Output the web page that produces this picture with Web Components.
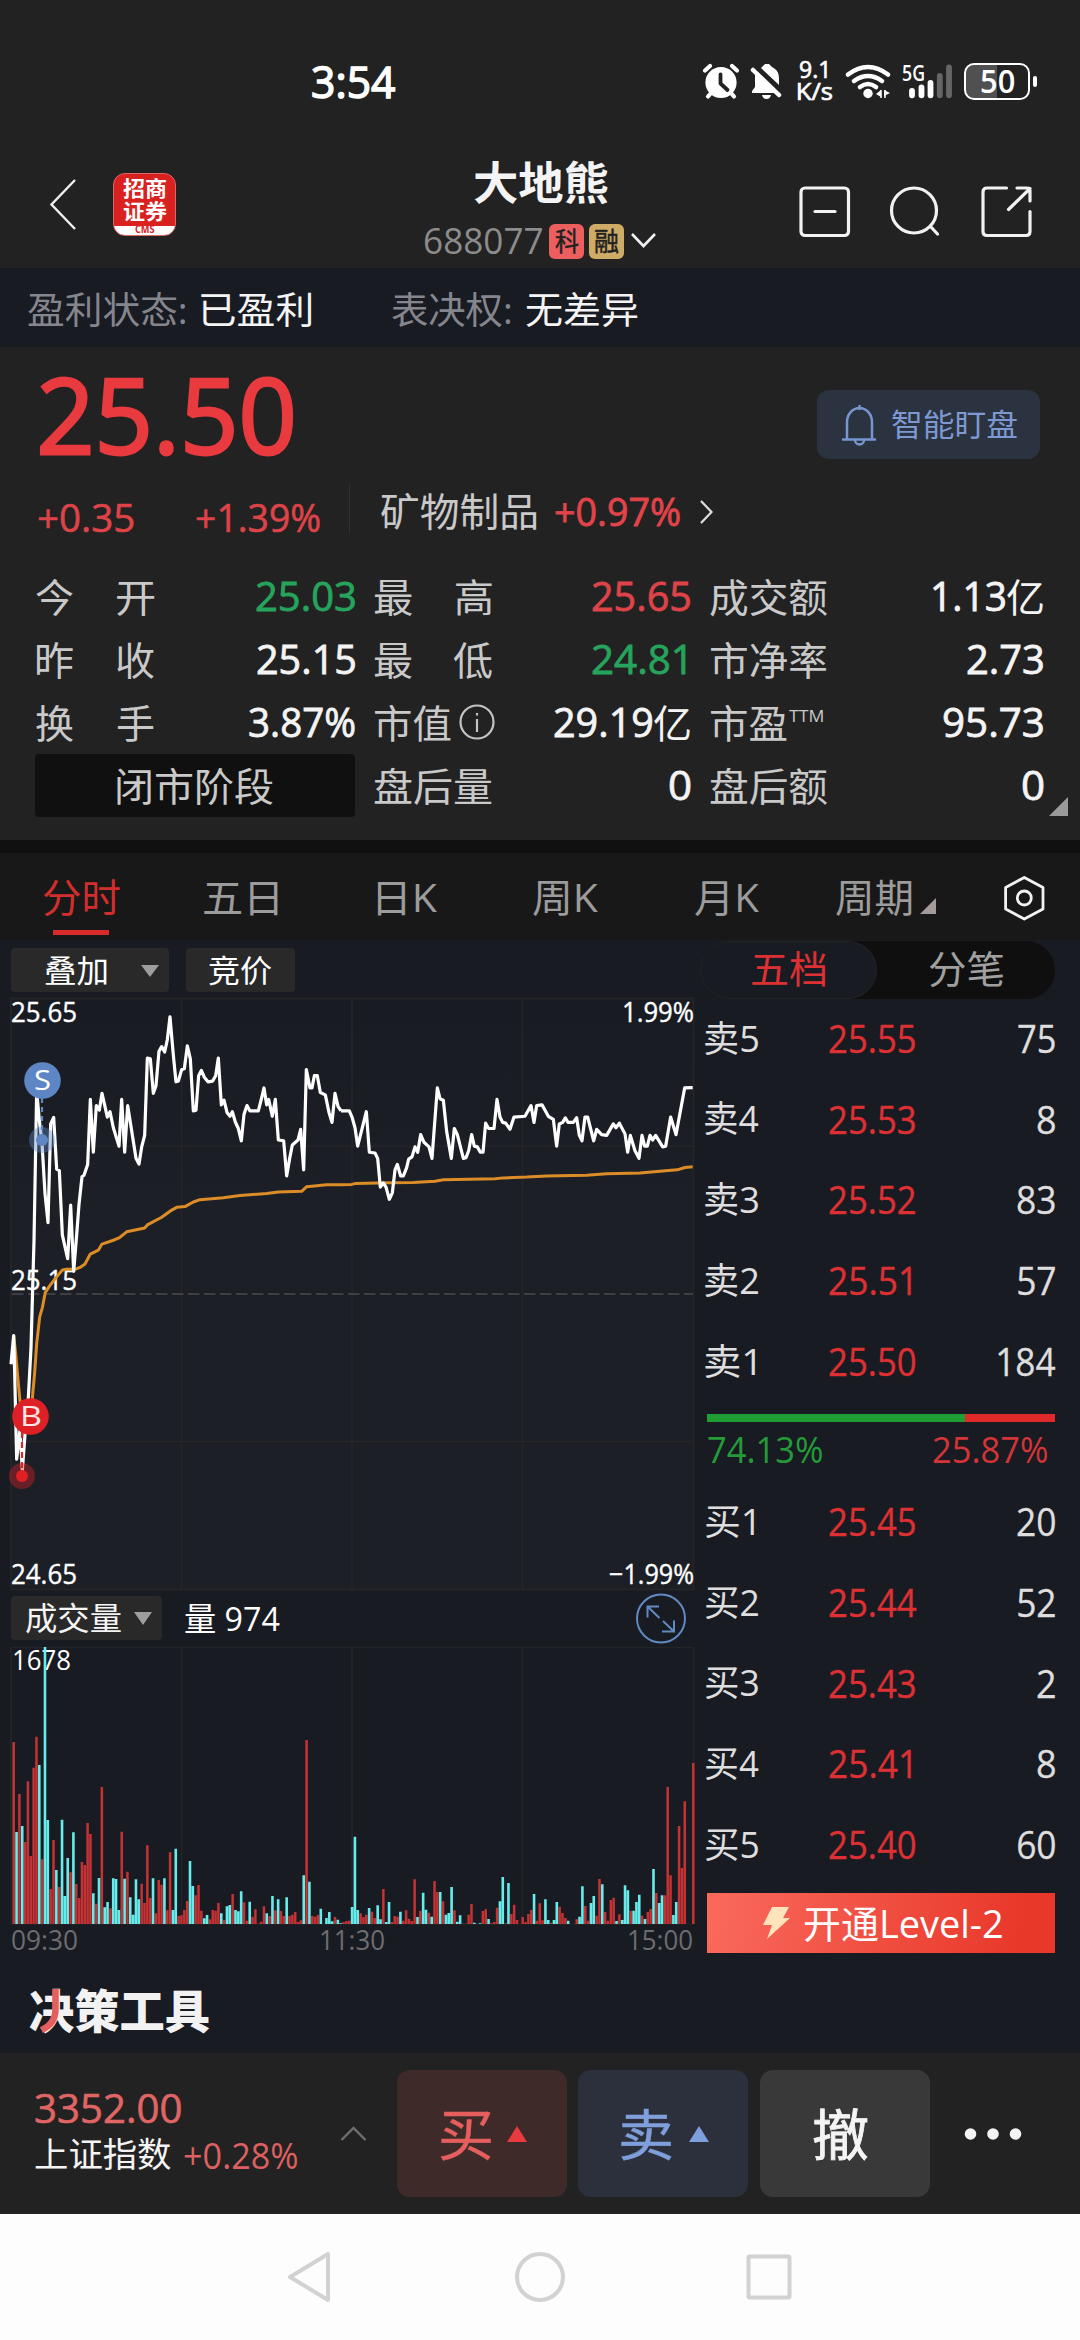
<!DOCTYPE html>
<html lang="zh-CN">
<head>
<meta charset="utf-8">
<title>大地熊 688077</title>
<style>
html,body{margin:0;padding:0;background:#191b23}
body{width:1080px;height:2340px;overflow:hidden}
</style>
</head>
<body>
<stock-page></stock-page>
<script>
const BASE = `*{box-sizing:border-box}svg{display:block;flex:none;overflow:visible}.r{display:flex;align-items:center}.c{display:flex;flex-direction:column}`;
function def(name, css, html) {
  customElements.define(name, class extends HTMLElement {
    constructor() {
      super();
      this.attachShadow({mode: 'open'}).innerHTML =
        `<style>${BASE}${css}</style>` + (typeof html === 'function' ? html(this) : html);
    }
  });
}

/* A line of text whose visible width is set by "w"; s = size, c = colour, b = weight, l = left gap, t = top shift, k = extra stroke */
const pen = document.createElement('canvas').getContext('2d');
const STACK = '"Open Sans","Noto Sans CJK SC",sans-serif';
customElements.define('t-x', class extends HTMLElement {
  connectedCallback() {
    if (this.shadowRoot) return;
    const a = n => this.getAttribute(n);
    const s = +a('s'), w = +a('w'), b = a('b') || 400, text = this.textContent;
    const fam = a('f') ? `"${a('f')}",${STACK}` : STACK;
    pen.font = `${b} ${s}px ${fam}`;
    const m = pen.measureText(text);
    const k = w / (m.actualBoundingBoxLeft + m.actualBoundingBoxRight);
    this.attachShadow({mode: 'open'}).innerHTML = `<style>
      :host{display:block;flex:none;width:${w}px;height:${s}px;margin-left:${a('l') || 0}px;margin-top:${a('t') || 0}px}
      span{display:block;width:max-content;white-space:pre;font:${b} ${s}px/${s}px ${fam.replace(/"/g, "'")};color:${a('c') || '#f4f4f4'};
      ${a('k') ? `-webkit-text-stroke:${a('k')}px ${a('c') || '#f4f4f4'};` : ''}
      transform-origin:0 50%;transform:translateX(${m.actualBoundingBoxLeft * k}px) scaleX(${k})}</style><span><slot></slot></span>`;
  }
});

def('status-bar', `:host{display:block;height:160px;padding-top:4px}
  .r{height:154px;padding-left:313px}.net{margin-left:16px;gap:0;width:34px}.g{margin-left:10px;width:52px;height:42px;position:relative}
  .bat{margin-left:11px;width:66px;height:37px;border:2.6px solid #fff;border-radius:10px;background:linear-gradient(90deg,#505050 50%,transparent 50%);justify-content:center;padding:0}
  .nub{width:4px;height:11px;border-radius:2px;background:#fff;margin-left:3px}`,
  `<div class="r"><t-x w="82" s="44.500" k="1.500" c="#fff">3:54</t-x>
  <svg style="margin-left:307px" width="38" height="38" viewBox="702 61 38 38"><circle cx="721" cy="81.5" r="15.6" fill="#fff"/><g stroke="#fff" stroke-width="4.2" stroke-linecap="round"><path d="M705 69.500l5-4.500M737 69.500l-5-4.500M711 92l-3 3.500M731 92l3 3.500"/></g><path d="M720.500 73.500v9l7 6.500" fill="none" stroke="#222" stroke-width="3.800" stroke-linecap="round" stroke-linejoin="round"/></svg>
  <svg style="margin-left:10px" width="32" height="38" viewBox="750 61 32 38"><path d="M755 69l25 25-1-2H752v-2l3-4z" fill="#fff"/><path d="M761 67q2-2 4-4h4l3 3c6 3 7 7 7 12v6z" fill="#fff"/><path d="M753 69l26 25" stroke="#fff" stroke-width="4.500" stroke-linecap="round"/><path d="M762 94h9q-1 4-4.500 4t-4.500-4z" fill="#fff"/></svg>
  <div class="c net"><t-x w="27" s="23.500" k=".7" l="2" t="-1" c="#fff">9.1</t-x><t-x w="34" s="23" k=".7" t="-1" c="#fff">K/s</t-x></div>
  <svg style="margin-left:13px" width="46" height="38" viewBox="844 61 46 38"><g fill="none" stroke="#fff" stroke-width="4.600" stroke-linecap="round"><path d="M847 73.500q20-15 40 0M853 80q14-10 28 0M859 86q8-6 16 0"/></g><circle cx="867" cy="92.500" r="4.700" fill="#fff"/><path d="M875 93l5-4v7zM882 89v8M889 92l-6-3v6z" fill="#fff"/><path d="M880 89v8M884 89v8" stroke="#fff" stroke-width="1.500"/></svg>
  <svg style="margin-left:10px" width="53" height="38" viewBox="900 61 53 38"><text x="901" y="80" font-family="Open Sans" font-weight="600" font-size="22" fill="#fff" textLength="23" lengthAdjust="spacingAndGlyphs">5G</text><g stroke-width="5.800" stroke-linecap="round" stroke="#fff"><path d="M911 89.800v4.500M920.500 86.500v7.800M929.500 82v12.300"/><path d="M938.800 75v19.300M948 66.500v27.800" stroke="#666"/></g></svg>
  <div class="r bat" style="margin-left:10px"><t-x w="33" s="32" b="600" c="#fff">50</t-x></div><div class="nub"></div></div>`);

def('stock-header', `:host{display:block;height:108px}.h{align-items:flex-start}
  .logo{margin-left:37px;margin-top:13px;width:63px;height:63px;border-radius:12px;background:linear-gradient(#d9211f 52px,#fff 52px);border:1px solid #d66;align-items:center}
  .mid{margin-left:248px;width:232px;align-items:flex-start}
  .tag{width:35px;height:35px;border-radius:6px;background:#ed5f5f;justify-content:center}`,
  `<div class="r h"><svg style="margin:17px 0 0 49px" width="27" height="54" viewBox="49 177 27 54"><path d="M75 180L51.500 204.500 75 229" fill="none" stroke="#f0f0f0" stroke-width="2.400"/></svg>
  <div class="c logo"><t-x w="43" s="21" b="700" t="4" c="#fff">招商</t-x><t-x w="44" s="21" b="700" t="2" c="#fff">证券</t-x><t-x w="20" s="10" b="700" t="2" c="#d9211f">CMS</t-x></div>
  <div class="c mid"><t-x w="134" s="45" b="700" l="50">大地熊</t-x>
    <div class="r" style="margin-top:18px"><t-x w="117" s="36" c="#8c8c8c" l="1">688077</t-x><div class="r tag" style="margin-left:7px"><t-x w="24" s="26" k=".5" c="#222">科</t-x></div><div class="r tag" style="margin-left:5px;background:#ceac65"><t-x w="24" s="26" k=".5" c="#222">融</t-x></div>
    <svg style="margin-left:6px" width="27" height="18" viewBox="629 231 27 18"><path d="M631 233l11.500 12 11.500-12" fill="none" stroke="#f0f0f0" stroke-width="2.600"/></svg></div></div>
  <svg style="margin:25px 0 0 142px" width="236" height="54" viewBox="797 185 236 54"><g fill="none" stroke="#f2f2f2" stroke-width="3.200" stroke-linecap="round" stroke-linejoin="round"><rect x="800" y="188" width="47.500" height="47.500" rx="4"/><path d="M814 211.500h20"/><circle cx="913" cy="210.500" r="22.500"/><path d="M929.500 226.500l7 7.500"/><path d="M1005.500 188H986q-4 0-4 4v39.500q0 4 4 4h39q4 0 4-4V211.500M1016 188h10q3 0 3 3v10M1007.500 209.500L1029 188.500"/></g></svg></div>`);

def('info-banner', `:host{display:flex;align-items:center;height:79px;background:#191b23;padding:3px 0 0 28px}`,
  `<t-x w="158" s="37" c="#85868d">盈利状态:</t-x><t-x w="110" s="37" l="15">已盈利</t-x><t-x w="119" s="37" c="#85868d" l="81">表决权:</t-x><t-x w="112" s="37" l="15">无差异</t-x>`);

/* One label / value pair of the quote table */
def('quote-cell', `:host{display:flex;align-items:center;height:63px;justify-content:space-between}`, `<slot name="k"></slot><slot name="v"></slot>`);
const K = (a, w) => `<t-x slot="k" s="39" w="${w}" c="#c9c9c9">${a}</t-x>`;
const K2 = (a, b) => `<span slot="k" class="r two"><t-x s="39" w="37" c="#c9c9c9">${a}</t-x><t-x s="39" w="37" c="#c9c9c9">${b}</t-x></span>`;
const V = (a, w, c, r) => `<t-x slot="v" s="40" w="${w}" k=".8" ${c ? `c="${c}"` : ''} ${r ? `style="margin-right:${r}px"` : ''}>${a}</t-x>`;
const VY = (a, w) => `<span slot="v" class="r"><t-x s="40" w="${w}" k=".8">${a}</t-x><t-x s="39" w="36" l="2">亿</t-x></span>`;
const cell = (k, v) => `<quote-cell>${k}${v}</quote-cell>`;

def('quote-panel', `:host{display:block;height:493px;background:#222;position:relative}
  .top{height:137px;align-items:flex-start}.btn{margin:43px 0 0 524px;width:223px;height:69px;border-radius:12px;background:#2b3240}
  .mid{height:80px;align-items:flex-start}.two{width:118px;justify-content:space-between}
  .grid{display:grid;grid-template-columns:319px 316px 334px;column-gap:19px;padding-left:36px;margin-top:.5px}
  .phase{background:#101010;height:63px;margin-left:-1px;border-radius:4px;justify-content:center}
  .tri{position:absolute;right:12px;bottom:24px}`,
  `<div class="r top"><t-x w="251" s="105" k="2.800" l="41" t="14" c="#e93b3f">25.50</t-x>
   <div class="r btn" style="margin-left:525px"><svg style="margin-left:23px" width="38" height="42" viewBox="840 403 38 42"><path d="M843 438.500h32M847 438v-17a12.500 14 0 0 1 25 0v17M855 439a4.500 4.500 0 0 0 9 0M859.500 405v3" fill="none" stroke="#7796d0" stroke-width="2.500" stroke-linecap="round"/></svg><t-x w="125" s="31" l="14" c="#7c99d2">智能盯盘</t-x></div></div>
   <div class="r mid"><t-x w="96" s="39" l="38" t="13" c="#dd4348" k=".6">+0.35</t-x><t-x w="124" s="39" l="62" t="13" c="#dd4348" k=".6">+1.39%</t-x>
   <div style="width:1px;height:50px;background:#303030;margin-left:29px"></div><t-x w="156" s="39" l="31" t="7" c="#c9c9c9">矿物制品</t-x><t-x w="125" s="39" l="18" t="7" c="#e0444a" k=".8">+0.97%</t-x>
   <svg style="margin:15px 0 0 20px" width="14" height="26" viewBox="699 499 14 26"><path d="M700 501l10.500 11-10.500 11" fill="none" stroke="#e0e0e0" stroke-width="2.200"/></svg></div>
   <div class="grid">${[
    cell(K2('今','开'), V('25.03',99,'#26a45c')), cell(K('最　高',118), V('25.65',98,'#dd4348')), `<quote-cell style="margin-left:1px">${K('成交额',117)}${VY('1.13',72)}</quote-cell>`,
    cell(K2('昨','收'), V('25.15',98)), cell(K('最　低',118), V('24.81',94,'#26a45c',4)), `<quote-cell style="margin-left:1px">${K('市净率',117)}${V('2.73',76)}</quote-cell>`,
    cell(K2('换','手'), V('3.87%',106)),
    cell(`<span slot="k" class="r">${K('市值',77)}<svg style="margin-left:8px" width="36" height="38" viewBox="458 705 36 38"><circle cx="476" cy="724" r="16.500" fill="none" stroke="#c4c4c4" stroke-width="2.200"/><path d="M476 721v13M476 715v2.500" stroke="#c4c4c4" stroke-width="2.200"/></svg></span>`, VY('29.19',98)),
    `<quote-cell style="margin-left:1px"><span slot="k" class="r">${K('市盈',77)}<t-x s="17" w="34" l="2" t="-14" c="#c9c9c9">TTM</t-x></span>${V('95.73',99)}</quote-cell>`,
    `<div class="r phase"><t-x s="39" w="156" c="#c9c9c9">闭市阶段</t-x></div>`,
    cell(K('盘后量',118), V('0',20)), `<quote-cell style="margin-left:1px">${K('盘后额',117)}${V('0',20)}</quote-cell>`].join('')}</div>
   <svg class="tri" width="19" height="19"><path d="M19 0v19H0z" fill="#9a9a9a"/></svg>`);

def('period-tabs', `:host{display:block;height:100px;background:#181818;border-top:13px solid #101010;position:relative}
  .r{height:87px}.on{position:absolute;left:53px;bottom:5px;width:56px;height:5px;background:#d92a2b}`,
  `<div class="r"><t-x w="77" s="39" l="43" c="#d22e2e">分时</t-x><t-x w="74" s="39" l="84" c="#9c9c9c">五日</t-x><t-x w="60" s="39" l="99" c="#9c9c9c">日K</t-x><t-x w="65" s="39" l="96" c="#9c9c9c">周K</t-x><t-x w="64" s="39" l="97" c="#9c9c9c">月K</t-x><t-x w="76" s="39" l="77" c="#9c9c9c">周期</t-x>
  <svg style="margin:18px 0 0 8px" width="16" height="16"><path d="M16 0v16H0z" fill="#a39a9a"/></svg>
  <svg style="margin:2px 0 0 67px" width="42" height="46" viewBox="1002 874.500 42 46"><g fill="none" stroke="#f2f2f2" stroke-width="2.800" stroke-linejoin="round"><path d="M1023.300 877l18.700 10v21.500l-18.700 10-18.700-10V887z"/><circle cx="1023.300" cy="897.500" r="7"/></g></svg></div><div class="on"></div>`);

const label = (x, y, w, t, c = '#fff', s = 27.5) => `<text x="${x}" y="${y}" textLength="${w}" lengthAdjust="spacingAndGlyphs" font-family="Open Sans" font-size="${s}" fill="${c}">${t}</text>`;

def('trend-chart', `:host{display:block}`, `<svg width="698" height="598" viewBox="0 997 698 598">
  <defs><linearGradient id="g" x2="0" y2="1"><stop stop-color="#191b23"/><stop offset=".35" stop-color="#1c1f26"/></linearGradient></defs>
  <rect x="11" y="998.500" width="682.500" height="591" fill="url(#g)" stroke="#232427" stroke-width="2"/>
  <path d="M181.500 999v590M352 999v590M522.500 999v590M11 1146h682M11 1441.500h682" stroke="#25262a" stroke-width="1.500"/>
  <path d="M12 1294h681" stroke="#4a4b50" stroke-width="1.700" stroke-dasharray="11.500 4.500"/>
  <g stroke="#fff" stroke-width=".4">${label(11,1022,66,'25.65')}${label(11,1290,66,'25.15')}${label(11,1584,66,'24.65')}${label(622,1022,72,'1.99%')}${label(609,1584,85,'−1.99%')}</g>
  <g fill="none" stroke-linejoin="round">
  <g stroke="#dd8d27" stroke-width="3"><path vector-effect="non-scaling-stroke" transform="translate(0 990) scale(.33333 .38265)" d="M41 903L47 950 52 1000 60 1075 75 1120 90 1110 97 1068 104 1000 110 925 119 855 127 830 136 790 150 772 165 755 187 732 200 730 225 730 240 725 255 716 271 690 295 680 306 664 340 654 357 648 380 632 434 622 442 614 485 594 510 578 530 568 555 566 580 554 600 548 670 543 720 537 800 532 835 528 905 526 920 514 980 509 1020 509"/>
  <path vector-effect="non-scaling-stroke" transform="translate(340 990) scale(.33333 .38265)" d="M0 509L35 508 45 506 150 504 220 503 285 500 310 496 465 493 490 491 560 489 620 486 740 484 800 480 900 478 985 472 1012 470 1035 464 1058 462"/></g>
  <g stroke="#fff" stroke-width="3.200"><path vector-effect="non-scaling-stroke" transform="translate(0 990) scale(.33333 .38265)" d="M33 978L41 903 44 1000 50 1226 60 1150 67 1255 76 1150 85 1065 93 935 102 655 110 265 118 340 126 400 135 532 144 608 152 350 161 333 170 468 178 472 187 640 203 702 212 562 221 735 230 640 237 560 246 488 252 484 263 456 271 286 280 424 289 302 298 314 306 270 322 332 330 318 340 360 357 408 365 286 374 424 383 302 408 440 417 455 425 410 434 380 442 178 451 180 460 270 468 250 477 160 485 148 494 162 502 130 510 70 520 170 528 240 535 238 545 208 553 206 562 146 571 180 580 316 588 314 596 224 604 210 613 228 624 240 638 238 647 224 655 178 664 300 672 288 681 320 690 330 697 318 706 345 715 362 724 394 732 325 741 302 750 316 775 316 784 285 792 256 800 300 806 286 817 330 826 286 835 392 851 394 860 486 869 440 877 405 894 392 902 364 911 470 919 208 930 256 936 256 943 224 952 224 961 268 976 274 987 320 996 346 1005 270 1014 304 1023 316"/>
  <path vector-effect="non-scaling-stroke" transform="translate(340 990) scale(.33333 .38265)" d="M3 316L28 316 36 332 45 360 53 408 79 318 88 424 105 426 113 440 121 515 130 504 138 515 148 547 157 530 165 470 172 456 182 486 190 486 200 464 206 442 216 436 225 410 233 424 242 378 252 398 267 410 276 440 292 256 300 284 310 288 320 370 334 440 343 362 352 378 370 440 378 438 386 420 395 378 403 408 412 410 421 424 429 424 437 348 446 362 462 362 471 286 480 332 488 346 497 348 510 364 522 332 555 330 573 302 582 346 590 302 606 300 625 330 640 338 650 408 658 350 668 346 676 334 684 346 700 346 710 334 718 380 726 394 735 332 743 332 761 394 770 364 785 378 800 380 820 350 828 360 838 348 855 376 863 424 871 380 885 420 897 440 906 380 914 408 922 408 930 380 938 392 947 380 968 410 977 408 992 332 1008 378 1034 256 1058 255"/></g></g>
  <path d="M42 1098v40" stroke="#5e86c4" stroke-width="2.200" stroke-dasharray="5 4"/><circle cx="42" cy="1140" r="13" fill="#5e86c4" opacity=".4"/><circle cx="42" cy="1140" r="6" fill="#5e86c4"/>
  <circle cx="42.500" cy="1080.500" r="18.300" fill="#5e86c4"/>${label(34,1089.500,17,'S','#fff',27)}
  <path d="M22 1432v42" stroke="#d92a2b" stroke-width="2.200" stroke-dasharray="6 4"/><circle cx="22" cy="1476" r="13" fill="#dd2025" opacity=".4"/><circle cx="22" cy="1476" r="6" fill="#e02024"/>
  <circle cx="30.500" cy="1416.500" r="18.300" fill="#dd2025"/>${label(20,1426,22,'B','#ffe4e4',27)}
  </svg>`);

const VOL = `r486 c756 r642 c738 r786 r604 r828 r563 r470 c555 r838 c201 c720 r927 r780 c870 r921 c719 c948 c834 r877 c757 r912 r954 r846 r855 r729 r762 c940 r971 c894 r621 c982 c966 r985 c895 c897 c990 r755 c896 r875 c952 c1004 c898 c958 r911 r969 r796 r954 c895 r1000 r900 r914 c895 r991 r817 c990 c806 r1008 r1006 r990 r963 c843 c918 r946 r915 r992 c1015 c1005 r1018 r990 r992 r969 c1000 r1020 c979 c975 r942 c990 c994 c934 r967 r1022 c965 r1010 r988 r1031 r1025 r979 c1000 r1008 c948 r991 c958 r993 r1008 c952 r1008 r1004 r996 r1026 r1021 c886 r480 c905 r1008 r1010 r1005 c986 r1032 c1014 c996 c1024 r1011 c1019 c1030 r1026 r1023 r1022 c981 c770 c990 r1000 r1011 r1004 c984 r995 r1014 c976 c1018 r927 c1026 c966 r1026 r1008 r1010 c995 r1022 r991 r1016 r1023 r898 c1011 r993 c938 c989 r998 c1010 r903 r936 c936 r964 c1004 c999 c921 r991 c1025 c1006 r1031 r1031 r1004 r972 c1028 r1032 c1030 r993 r988 c1017 r1030 r1026 r983 c964 c891 r1030 c909 r1002 r974 r1020 r1032 r1011 r1026 r1002 r990 c942 r1022 r970 r1021 c958 c1020 r1028 c1020 c966 r980 r999 r1014 c1022 r1032 r1032 r1018 c1010 c919 r978 r1022 c969 c948 r1007 r897 c913 r996 r1022 r960 r953 c1023 r1003 c1020 c916 c931 r992 c992 c966 c944 r1007 c1017 r996 r987 c867 r939 c969 c946 r946 r621 r886 c1005 c966 r738 r864 r664 r1032 r1032 r549`.split(' ');
const bars = col => VOL.map((v, i) => {
  if (v[0] !== col) return '';
  const h = (1032 - v.slice(1)) / 3;
  return `M${(13.7 + i * 2.8435).toFixed(2)} 1924v${-h.toFixed(2)}`;
}).join('');

def('volume-chart', `:host{display:block}`, `<svg width="698" height="312" viewBox="0 1646 698 312">
  <path d="M11 1647.500h682.500V1924H11zM181.500 1648v276M352 1648v276M522.500 1648v276" fill="none" stroke="#232427" stroke-width="1.700"/>
  ${label(12,1670,59,'1678')}
  <path d="${bars('r')}" stroke="#c53234" stroke-width="2.500"/><path d="${bars('c')}" stroke="#66ecea" stroke-width="2.600"/>
  ${label(11,1950,67,'09:30','#6c6d71')}${label(319,1950,66,'11:30','#6c6d71')}${label(627,1950,66,'15:00','#6c6d71')}</svg>`);

def('chart-chip', `:host{display:flex;align-items:center;height:44px;background:#292929;border-radius:4px}`, `<slot></slot>`);

def('chart-column', `:host{display:block;width:700px}.a{height:57px;padding:3px 0 0 11px}.b{height:51px;padding:0 0 5px 11px}`,
  `<div class="r a"><chart-chip style="width:158px"><t-x w="62" s="31" l="34" c="#fff">叠加</t-x><svg style="margin:2px 0 0 34px" width="18" height="12"><path d="M0 0h18l-9 12z" fill="#9e9e9e"/></svg></chart-chip>
   <chart-chip style="width:109px;margin-left:17px"><t-x w="63" s="31" l="23" c="#fff">竞价</t-x></chart-chip></div>
   <trend-chart></trend-chart>
   <div class="r b"><chart-chip style="width:151px"><t-x w="95" s="32" l="15" c="#f4f4f4">成交量</t-x><svg style="margin:1px 0 0 13px" width="18" height="13"><path d="M0 0h18l-9 13z" fill="#9e9e9e"/></svg></chart-chip>
   <t-x w="95" s="33" l="23" c="#fff">量 974</t-x>
   <svg style="margin-left:355px" width="52" height="51" viewBox="635 1592.500 52 51"><g fill="none" stroke="#6189c2" stroke-width="2"><circle cx="661" cy="1618" r="24"/><path d="M647.500 1617v-11h11.500M647.500 1606l12 11.500M674 1620v11h-12M674 1631l-11-10.500"/></g></svg></div>
   <volume-chart></volume-chart>`);

def('book-row', `:host{display:flex;align-items:center;height:80.75px}.q{flex:1;display:flex;justify-content:flex-end}`, el => {
  const [k, w, p, pw, q, qw] = el.getAttribute('d').split('|');
  return `<t-x s="36.500" w="${w}" c="#dedede">${k}</t-x><t-x s="38" w="${pw}" l="${124 - w}" c="#dc3033" k=".4">${p}</t-x><div class="q"><t-x s="38" w="${qw}" c="#dedede" k=".3">${q}</t-x></div>`;
});
const rows = a => a.map(d => `<book-row d="${d}"></book-row>`).join('');
def('order-book', `:host{display:block;width:355px}
  .pill{height:58px;border-radius:29px;background:#0f0f0f}.on{width:177px;height:58px;border-radius:29px;background:#191b23;border:1.5px solid #242426;padding-left:51px}
  .rows{padding-left:5px}.up{margin-top:-1.5px}.bar{height:8px;margin:12.5px 0 0 7px;background:linear-gradient(90deg,#1f9f33 258px,#e02a2a 258px)}
  .pc{height:59px;padding-bottom:5px}.l2{margin:8px 0 0 7px;height:60px;background:linear-gradient(100deg,#fa6a5d,#e8382a 90%)}`,
  `<div class="r pill"><div class="r on"><t-x w="74" s="38" t="-4" c="#dc3033">五档</t-x></div><t-x w="74" s="38" l="52" t="-4" c="#a0a0a0">分笔</t-x></div>
  <div class="rows up">${rows(['卖5|53|25.55|86|75|37','卖4|54|25.53|86|8|18','卖3|53|25.52|86|83|38','卖2|53|25.51|82|57|37','卖1|50|25.50|86|184|57'])}</div>
  <div class="bar"></div><div class="r pc"><t-x w="114" s="37" l="8" c="#249a38">74.13%</t-x><t-x w="114" s="37" l="111" c="#d23437">25.87%</t-x></div>
  <div class="rows">${rows(['买1|49|25.45|86|20|38','买2|53|25.44|87|52|37','买3|53|25.43|86|2|18','买4|54|25.41|82|8|18','买5|53|25.40|86|60|37'])}</div>
  <div class="r l2"><svg style="margin-left:56px" width="27" height="32"><path d="M9 0h17l-6 11h7L4 32l5-14H0z" fill="#ffe3bd"/></svg><t-x w="198" s="38" l="14" c="#fff">开通Level-2</t-x></div>`);

def('tools-title', `:host{display:block;position:relative;height:95px;padding:29px 0 0 29px}svg{position:absolute;left:36px;top:31px}`,
  `<t-x w="181" s="46" b="900" c="#f2f2f2">决策工具</t-x><svg width="26" height="44" viewBox="36 1989 26 44"><path d="M55.500 1989v20q0 15-14 21" fill="none" stroke="#e55f5f" stroke-width="6.500"/></svg>`);

def('trade-button', `:host{display:flex;align-items:center;height:127px;width:170px;border-radius:13px}`, `<slot></slot>`);
def('trade-bar', `:host{display:flex;align-items:center;height:161px;background:#222}.i{width:306px;padding:0 0 8px 35px}`,
  `<div class="c i"><t-x w="146" s="41" c="#e06565" k=".6">3352.00</t-x><div class="r" style="margin-top:8px"><t-x w="136" s="34.500">上证指数</t-x><t-x w="113" s="37" l="13" c="#dc6060">+0.28%</t-x></div></div>
  <svg style="margin-left:34px" width="28" height="16" viewBox="340 2126 28 16"><path d="M341.500 2140L353.500 2128l12 12" fill="none" stroke="#6e6e6e" stroke-width="2.400"/></svg>
  <trade-button style="margin-left:29px;background:#3f2a2a"><t-x w="51" s="55" l="43" c="#e55f5f" k=".5">买</t-x><svg style="margin-left:16px" width="20" height="16"><path d="M10 0l10 16H0z" fill="#e93b3f"/></svg></trade-button>
  <trade-button style="margin-left:11px;background:#2b303c"><t-x w="51" s="55" l="43" c="#7f9fda" k=".5">卖</t-x><svg style="margin-left:17px" width="20" height="16"><path d="M10 0l10 16H0z" fill="#7f9fda"/></svg></trade-button>
  <trade-button style="margin-left:12px;background:#393939"><t-x w="54" s="55" l="53" k=".8">撤</t-x></trade-button>
  <svg style="margin-left:34px" width="60" height="14"><g fill="#f4f4f4"><circle cx="6.500" cy="7" r="5.800"/><circle cx="29" cy="7" r="5.800"/><circle cx="51.500" cy="7" r="5.800"/></g></svg>`);

def('nav-bar', `:host{display:block;height:126px;background:#fdfdfd}`,
  `<svg width="1080" height="126" viewBox="0 2214 1080 126"><g fill="none" stroke="#d2d2d2" stroke-width="4" stroke-linejoin="round"><path d="M328 2254v46L290 2277z"/><circle cx="540" cy="2277" r="23"/><rect x="748.500" y="2256.500" width="41" height="41" rx="1"/></g></svg>`);

def('stock-page', `:host{display:block;width:1080px;height:2340px;background:#222}.main{background:#191b23;height:1113px}.cols{height:1018px;align-items:flex-start}order-book{margin-top:1px}`,
  `<status-bar></status-bar><stock-header></stock-header><info-banner></info-banner><quote-panel></quote-panel><period-tabs></period-tabs>
  <div class="main"><div class="r cols"><chart-column></chart-column><order-book></order-book></div><tools-title></tools-title></div>
  <trade-bar></trade-bar><nav-bar></nav-bar>`);
</script>
</body>
</html>
